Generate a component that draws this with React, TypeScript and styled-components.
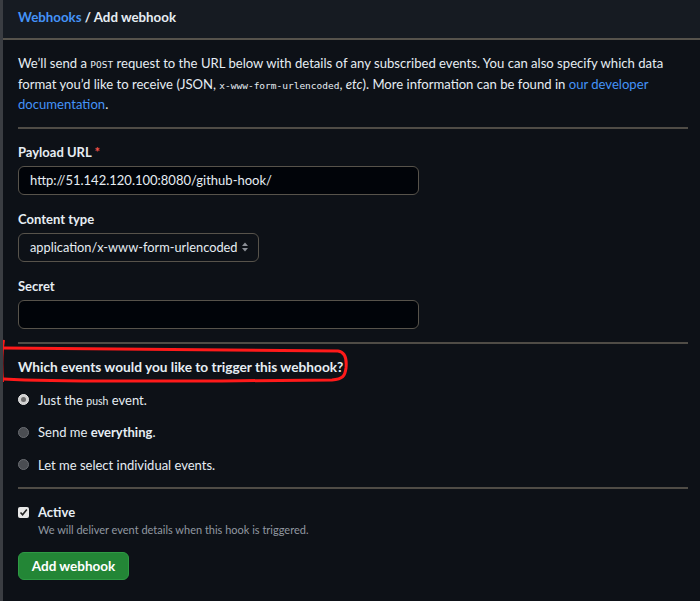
import React from "react";
import styled, { createGlobalStyle } from "styled-components";

const Global = createGlobalStyle`
  html, body { margin: 0; padding: 0; background: #0d1117; }
  body { font-family: Lato, "Noto Sans", sans-serif; color: #e6edf3; }
  * { box-sizing: border-box; }
`;

const Page = styled.div`
  width: 700px;
  height: 601px;
  background: #0d1117;
  border-left: 3px solid #3a3d42;
  overflow: hidden;
`;

const Header = styled.div`
  height: 40px;
  background: #161b22;
  border-bottom: 2px solid #56534c;
  display: flex;
  align-items: center;
  padding: 0 15px 4px;
  font-size: 13.3px;
  font-weight: 700;
`;

const Crumb = styled.a`
  color: #4493f8;
  text-decoration: none;
`;

const Body = styled.div`
  padding: 14px 12px 0 15px;
`;

const Intro = styled.p`
  margin: 0;
  font-size: 13.1px;
  line-height: 19.5px;
  color: #e6edf3;
`;

const Code = styled.code`
  font-family: "DejaVu Sans Mono", monospace;
  font-size: 9.5px;
`;

const Link = styled.a`
  color: #4493f8;
  text-decoration: none;
`;

const Divider = styled.hr<{ $top?: number; $bottom?: number }>`
  border: none;
  border-top: 2px solid #4f4c46;
  margin: ${(p) => `${p.$top ?? 14}px 0 ${p.$bottom ?? 14}px`};
`;

const Field = styled.div`
  display: flex;
  flex-direction: column;
  gap: 5px;
  margin-bottom: 15px;
`;

const Label = styled.label`
  font-size: 13px;
  font-weight: 700;
  line-height: 18px;
`;

const Req = styled.span`
  color: #f85149;
`;

const Input = styled.div<{ $w: number }>`
  width: ${(p) => p.$w}px;
  height: 29px;
  background: #010409;
  border: 1px solid #57534b;
  border-radius: 6px;
  display: flex;
  align-items: center;
  padding: 0 11px;
  font-size: 13px;
  white-space: nowrap;
  color: #e6edf3;
`;

const Select = styled(Input)`
  justify-content: space-between;
  background: #0d1117;
  padding-right: 9px;
  font-size: 12.8px;
`;

const HeadingWrap = styled.div`
  position: relative;
  margin: 14px 0 14px;
`;

const Heading = styled.div`
  font-size: 13.7px;
  font-weight: 700;
  line-height: 18px;
`;

const RadioRow = styled.div`
  display: flex;
  align-items: center;
  gap: 9px;
  height: 20px;
  margin-bottom: 12.5px;
  font-size: 13px;
`;

const Radio = styled.span<{ $on?: boolean }>`
  width: 11px;
  height: 11px;
  border-radius: 50%;
  flex: none;
  background: ${(p) => (p.$on ? "#d0d0d0" : "#4a4d52")};
  border: 1px solid ${(p) => (p.$on ? "#e8e8e8" : "#6a6d72")};
  display: flex;
  align-items: center;
  justify-content: center;
  &::after {
    content: "";
    width: 5px;
    height: 5px;
    border-radius: 50%;
    background: ${(p) => (p.$on ? "#6b6b6b" : "transparent")};
  }
`;

const Small = styled.span`
  font-size: 10.5px;
`;

const Strong = styled.span`
  font-weight: 700;
`;

const CheckRow = styled.div`
  display: flex;
  align-items: flex-start;
  gap: 9px;
`;

const Check = styled.span`
  width: 11px;
  height: 11px;
  margin-top: 4px;
  flex: none;
  background: #e8e8e8;
  border-radius: 2px;
  display: flex;
  align-items: center;
  justify-content: center;
`;

const CheckText = styled.div`
  display: flex;
  flex-direction: column;
`;

const Hint = styled.div`
  font-size: 11px;
  color: #9198a1;
  line-height: 16px;
  margin-top: 1px;
`;

const Button = styled.button`
  margin-top: 14px;
  height: 28px;
  width: 111px;
  background: #238636;
  border: 1px solid #2e9a44;
  border-radius: 6px;
  color: #ffffff;
  font-family: Lato, "Noto Sans", sans-serif;
  font-size: 13.5px;
  font-weight: 700;
  padding: 0;
`;

const Annotation = styled.svg`
  position: absolute;
  left: -18px;
  top: -20px;
  pointer-events: none;
`;

export default function App() {
  return (
    <Page>
      <Global />
      <Header>
        <Crumb>Webhooks</Crumb>
        <span>&nbsp;/ Add webhook</span>
      </Header>
      <Body>
        <Intro>
          We’ll send a <Code>POST</Code> request to the URL below with details of any subscribed events. You can also
          specify which data format you’d like to receive (JSON, <Code>x-www-form-urlencoded</Code>, <em>etc</em>). More
          information can be found in <Link>our developer documentation</Link>.
        </Intro>
        <Divider $top={12} $bottom={14} />
        <Field>
          <Label>
            Payload URL <Req>*</Req>
          </Label>
          <Input $w={401}>http://51.142.120.100:8080/github-hook/</Input>
        </Field>
        <Field>
          <Label>Content type</Label>
          <Select $w={241}>
            <span>application/x-www-form-urlencoded</span>
            <svg width="8" height="12" viewBox="0 0 8 12">
              <path d="M4 1.5 L7 5 H1 Z" fill="#8b8f96" />
              <path d="M4 10.5 L7 7 H1 Z" fill="#8b8f96" />
            </svg>
          </Select>
        </Field>
        <Field>
          <Label>Secret</Label>
          <Input $w={401} />
        </Field>
        <Divider $top={-2} $bottom={0} />
        <HeadingWrap>
          <Heading>Which events would you like to trigger this webhook?</Heading>
          <Annotation width="352" height="50" viewBox="0 0 352 50">
            <path
              d="M4 10 C80 10 200 11 338 13 C345 14 347 20 346 30 C345 38 343 41 332 42 C250 43 200 43 120 43 C80 43 40 43 4 41"
              stroke="#ff1a1a"
              strokeWidth="3"
              fill="none"
              strokeLinecap="round"
            />
            <path d="M4 2 C2 14 2 30 3 44" stroke="#ff1a1a" strokeWidth="2" fill="none" />
          </Annotation>
        </HeadingWrap>
        <RadioRow>
          <Radio $on />
          <span>
            Just the <Small>push</Small> event.
          </span>
        </RadioRow>
        <RadioRow>
          <Radio />
          <span>
            Send me <Strong>everything</Strong>.
          </span>
        </RadioRow>
        <RadioRow>
          <Radio />
          <span>Let me select individual events.</span>
        </RadioRow>
        <Divider $top={0} $bottom={14} />
        <CheckRow>
          <Check>
            <svg width="9" height="9" viewBox="0 0 9 9">
              <path d="M1.5 4.5 L3.6 6.8 L7.8 1.6" stroke="#222" strokeWidth="1.6" fill="none" />
            </svg>
          </Check>
          <CheckText>
            <Label as="div">Active</Label>
            <Hint>We will deliver event details when this hook is triggered.</Hint>
          </CheckText>
        </CheckRow>
        <Button>Add webhook</Button>
      </Body>
    </Page>
  );
}
